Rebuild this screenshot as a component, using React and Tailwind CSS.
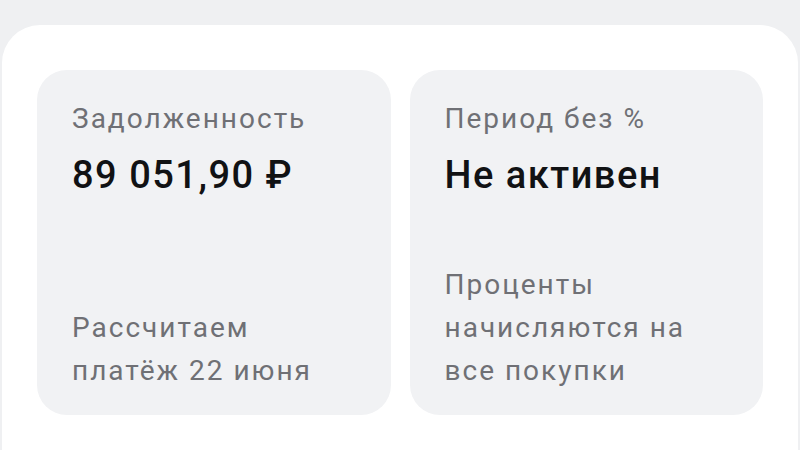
export default function App() {
  return (
    <main className="min-h-[450px] w-full overflow-hidden bg-[#eff0f2] pt-[25px] font-['Roboto',sans-serif]">
      <section className="mx-[2px] min-h-[425px] rounded-t-[38px] bg-white px-[35px] pt-[45px]">
        <div className="grid grid-cols-2 gap-[19px]">
          <div className="flex h-[345px] flex-col justify-between rounded-[30px] bg-[#f1f2f4] px-[35px] pt-[27px] pb-[23px]">
            <div>
              <p className="text-[28px] leading-[43px] tracking-[2px] text-[#6f7075]">Задолженность</p>
              <p className="mt-[11px] text-[38px] leading-[48px] font-medium tracking-[1.5px] text-[#111214]">89 051,90 ₽</p>
            </div>
            <p className="text-[28px] leading-[43px] tracking-[2px] text-[#6f7075]">
              Рассчитаем
              <br />
              платёж 22 июня
            </p>
          </div>

          <div className="flex h-[345px] flex-col justify-between rounded-[30px] bg-[#f1f2f4] px-[35px] pt-[27px] pb-[23px]">
            <div>
              <p className="text-[28px] leading-[43px] tracking-[2px] text-[#6f7075]">Период без %</p>
              <p className="mt-[11px] text-[38px] leading-[48px] font-medium tracking-[1.5px] text-[#111214]">Не активен</p>
            </div>
            <p className="text-[28px] leading-[43px] tracking-[2px] text-[#6f7075]">
              Проценты
              <br />
              начисляются на
              <br />
              все покупки
            </p>
          </div>
        </div>
      </section>
    </main>
  );
}
